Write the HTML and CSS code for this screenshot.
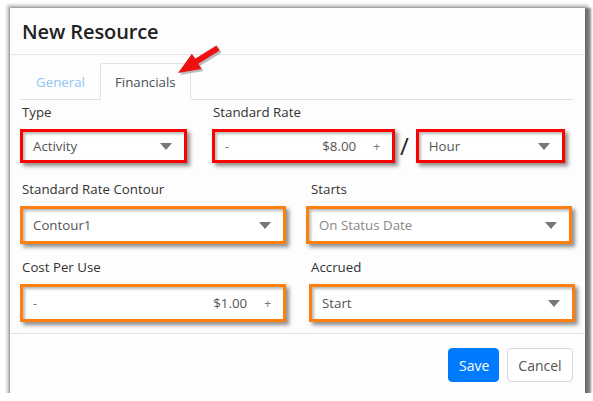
FILE: index.html
```html
<!DOCTYPE html>
<html>
<head>
<meta charset="utf-8">
<link rel="stylesheet" href="styles.css">
</head>
<body>
<div class="dialog">
  <div class="header"><h1>New Resource</h1></div>
  <div class="body">
    <div class="tabs">
      <span class="tab">General</span>
      <span class="tab active">Financials</span>
    </div>
    <div class="row row1">
      <div class="field f-type">
        <label>Type</label>
        <div class="anno red w-type"><div class="ctl"><span>Activity</span><i class="caret"></i></div></div>
      </div>
      <div class="field f-rate">
        <label>Standard Rate</label>
        <div class="rate-line">
          <div class="anno red w-rate"><div class="ctl spin"><span class="pm">-</span><span class="val">$8.00</span><span class="pm plus">+</span></div></div>
          <span class="slash">/</span>
          <div class="anno red w-hour"><div class="ctl"><span>Hour</span><i class="caret"></i></div></div>
        </div>
      </div>
    </div>
    <div class="row row2">
      <div class="field">
        <label>Standard Rate Contour</label>
        <div class="anno orange"><div class="ctl"><span>Contour1</span><i class="caret"></i></div></div>
      </div>
      <div class="field right">
        <label>Starts</label>
        <div class="anno orange"><div class="ctl"><span class="muted">On Status Date</span><i class="caret"></i></div></div>
      </div>
    </div>
    <div class="row row3">
      <div class="field">
        <label>Cost Per Use</label>
        <div class="anno orange"><div class="ctl spin"><span class="pm">-</span><span class="val">$1.00</span><span class="pm plus">+</span></div></div>
      </div>
      <div class="field right r3">
        <label>Accrued</label>
        <div class="anno orange"><div class="ctl"><span>Start</span><i class="caret"></i></div></div>
      </div>
    </div>
  </div>
  <div class="footer">
    <button class="btn save">Save</button>
    <button class="btn cancel">Cancel</button>
  </div>
  <svg class="arrow" width="60" height="44" viewBox="0 0 60 44">
    <polygon fill="#7a7a7a" opacity="0.5" transform="translate(2,2)" points="8,35 21.9,15.7 25.1,20.8 46.4,7.5 49.6,12.5 28.3,25.8 31.5,30.9"/>
    <polygon fill="#ee1111" points="8,35 21.9,15.7 25.1,20.8 46.4,7.5 49.6,12.5 28.3,25.8 31.5,30.9"/>
  </svg>
</div>
</body>
</html>
```
FILE: styles.css
```css
html, body {
  margin: 0;
  padding: 0;
  background: #ffffff;
}
body {
  font-family: "Open Sans", "Noto Sans", sans-serif;
  font-size: 13.3px;
  color: #333;
}
.dialog {
  position: relative;
  margin: 8px 0 0 10px;
  width: 575px;
  height: 385px;
  background: #fdfdfd;
  box-shadow: 3px 3px 2px 3px rgba(0, 0, 0, 0.45), 0 0 3px 3px rgba(0, 0, 0, 0.25);
  display: flex;
  flex-direction: column;
}
.header {
  border-bottom: 1px solid #e6e6e6;
  display: flex;
  align-items: center;
  padding-left: 12px;
  box-sizing: border-box;
  height: 47px;
}
.header h1 {
  margin: 0;
  font-size: 20px;
  font-weight: 600;
  color: #222;
  letter-spacing: -0.1px;
}
.body {
  padding: 8px 12px 0 10px;
  height: 279px;
  box-sizing: border-box;
  border-bottom: 1px solid #e3e3e3;
}
.tabs {
  display: flex;
  height: 37px;
  border-bottom: 1px solid #e2e2e2;
  box-sizing: border-box;
}
.tab {
  display: flex;
  align-items: center;
  padding: 0 14px 0 15px;
  color: #8fc4f5;
  border: 1px solid transparent;
  border-radius: 3px 3px 0 0;
  margin-bottom: -1px;
}
.tab.active {
  color: #495057;
  background: #fdfdfd;
  border-color: #e2e2e2 #e2e2e2 #fdfdfd;
  padding: 0 14px 0 14px;
}
.row {
  display: grid;
}
.row1 {
  grid-template-columns: 191px auto;
  margin-top: 3px;
}
.row2 {
  grid-template-columns: 286px auto;
  margin-top: 17px;
}
.row3 {
  grid-template-columns: 286px auto;
  margin-top: 14px;
}
.field label {
  display: block;
  height: 18px;
  line-height: 18px;
  padding-left: 2px;
  margin-bottom: 8px;
  color: #333;
}
.field.right label {
  padding-left: 5px;
}
.field.r3 .anno {
  margin-left: 3px;
}
.anno {
  box-sizing: border-box;
  border: 3px solid;
  box-shadow: 3px 3px 4px rgba(0, 0, 0, 0.45);
  background: #fff;
}
.red {
  border-color: #ff0000;
  height: 34px;
}
.orange {
  border-color: #ff7f0e;
  height: 38px;
  width: 266px;
}
.w-type { width: 167px; }
.w-rate { width: 183px; }
.w-hour { width: 149px; }
.ctl {
  height: 100%;
  box-sizing: border-box;
  box-shadow: inset 2px 2px 3px rgba(0, 0, 0, 0.28);
  display: flex;
  align-items: center;
  padding: 0 10px 0 10px;
  color: #555;
}
.ctl > span:first-child {
  flex: 1;
}
.muted {
  color: #888;
}
.caret {
  width: 0;
  height: 0;
  border-left: 6px solid transparent;
  border-right: 6px solid transparent;
  border-top: 7px solid #777;
  margin-right: 2px;
}
.spin .pm {
  flex: 0 0 auto !important;
  color: #777;
  font-size: 12px;
}
.spin .val {
  flex: 1;
  text-align: right;
  padding-right: 17px;
}
.spin .plus {
  margin-right: 2px;
}
.rate-line {
  display: flex;
  align-items: center;
  padding-left: 1px;
}
.slash {
  font-size: 24px;
  color: #222;
  margin: 0 7px 0 5px;
  line-height: 1;
}
.footer {
  flex: 1;
  display: flex;
  justify-content: flex-end;
  align-items: flex-start;
  padding: 14px 12px 0 0;
  gap: 8px;
}
.btn {
  font-family: "Open Sans", "Noto Sans", sans-serif;
  font-size: 14px;
  height: 34px;
  border-radius: 4px;
  padding: 0 10px;
  cursor: pointer;
}
.save {
  background: #007bff;
  color: #fff;
  border: 1px solid #007bff;
  width: 51px;
}
.cancel {
  background: #fff;
  color: #555;
  border: 1px solid #d6d6d6;
  width: 66px;
}
.arrow {
  position: absolute;
  left: 160px;
  top: 30px;
}
```
